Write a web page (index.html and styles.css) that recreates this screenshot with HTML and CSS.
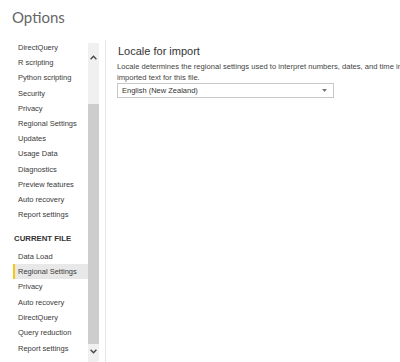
FILE: index.html
```html
<!DOCTYPE html>
<html>
<head>
<meta charset="utf-8">
<link rel="stylesheet" href="styles.css">
</head>
<body>
<div class="window">
  <h1 class="title">Options</h1>
  <div class="main">
    <nav class="sidebar">
      <ul class="nav global">
        <li>DirectQuery</li>
        <li>R scripting</li>
        <li>Python scripting</li>
        <li>Security</li>
        <li>Privacy</li>
        <li>Regional Settings</li>
        <li>Updates</li>
        <li>Usage Data</li>
        <li>Diagnostics</li>
        <li>Preview features</li>
        <li>Auto recovery</li>
        <li>Report settings</li>
      </ul>
      <div class="section">CURRENT FILE</div>
      <ul class="nav file">
        <li>Data Load</li>
        <li class="active">Regional Settings</li>
        <li>Privacy</li>
        <li>Auto recovery</li>
        <li>DirectQuery</li>
        <li>Query reduction</li>
        <li>Report settings</li>
      </ul>
    </nav>
    <div class="scrollbar">
      <div class="arrow up"><svg width="7" height="5" viewBox="0 0 7 5"><path d="M0.6 4.2 L3.5 1.2 L6.4 4.2" fill="none" stroke="#444" stroke-width="1.3"/></svg></div>
      <div class="thumb"></div>
      <div class="arrow down"><svg width="7" height="5" viewBox="0 0 7 5"><path d="M0.6 0.8 L3.5 3.8 L6.4 0.8" fill="none" stroke="#444" stroke-width="1.3"/></svg></div>
    </div>
    <div class="divider"></div>
    <section class="content">
      <h2 class="heading">Locale for import</h2>
      <p class="desc">Locale determines the regional settings used to interpret numbers, dates, and time in imported text for this file.</p>
      <div class="select">
        <span>English (New Zealand)</span>
        <svg class="caret" width="5" height="3" viewBox="0 0 5 3"><path d="M0 0 H5 L2.5 3 Z" fill="#777"/></svg>
      </div>
    </section>
  </div>
</div>
</body>
</html>
```
FILE: styles.css
```css
html, body {
  margin: 0;
  padding: 0;
  background: #ffffff;
  overflow: hidden;
}
body {
  width: 400px;
  height: 362px;
  font-family: "Liberation Sans", Arial, sans-serif;
  color: #333;
}
.window {
  display: flex;
  flex-direction: column;
  height: 362px;
}
.title {
  margin: 0;
  padding: 8px 0 0 12px;
  height: 40px;
  box-sizing: border-box;
  font-family: Lato, "Open Sans", sans-serif;
  font-weight: 400;
  font-size: 15px;
  line-height: 18px;
  color: #666;
}
.main {
  display: flex;
  flex: 1;
  min-height: 0;
}
.sidebar {
  width: 88px;
  flex: none;
}
.nav {
  list-style: none;
  margin: 0;
  padding: 0;
}
.nav li {
  height: 15.2px;
  line-height: 15.2px;
  padding-left: 18px;
  font-size: 7.5px;
  color: #3a3a3a;
  white-space: nowrap;
}
.nav.file li {
  height: 15.3px;
  line-height: 15.3px;
}
.nav li.active {
  background: #e8e8e8;
  margin-left: 13px;
  border-left: 2px solid #f2c811;
  padding-left: 3px;
}
.section {
  margin: 10.5px 0 4px 14px;
  height: 12px;
  line-height: 12px;
  font-size: 7.8px;
  font-weight: 700;
  color: #333;
}
.scrollbar {
  width: 11px;
  flex: none;
  background: #f0f0f0;
  margin-top: 3px;
  display: flex;
  flex-direction: column;
}
.arrow {
  display: flex;
  align-items: center;
  justify-content: center;
}
.arrow.up {
  height: 28px;
  margin-bottom: 33px;
}
.thumb {
  flex: 1;
  background: #cdcdcd;
}
.arrow.down {
  height: 14px;
  margin-bottom: 4px;
}
.divider {
  width: 1px;
  flex: none;
  background: #e6e6e6;
  margin-left: 6px;
}
.content {
  flex: 1;
  padding: 4px 0 0 11px;
  min-width: 0;
}
.heading {
  margin: 0;
  padding-left: 1px;
  font-size: 11px;
  font-weight: 400;
  line-height: 14px;
  color: #333;
}
.desc {
  margin: 3px 0 0 0;
  width: 300px;
  font-size: 7.6px;
  line-height: 11px;
  color: #444;
}
.select {
  width: 217px;
  height: 15px;
  box-sizing: border-box;
  border: 1px solid #c8c8c8;
  display: flex;
  align-items: center;
  justify-content: space-between;
  padding: 0 6px 0 4px;
  font-size: 7.5px;
  color: #333;
}
.caret {
  flex: none;
}
```
